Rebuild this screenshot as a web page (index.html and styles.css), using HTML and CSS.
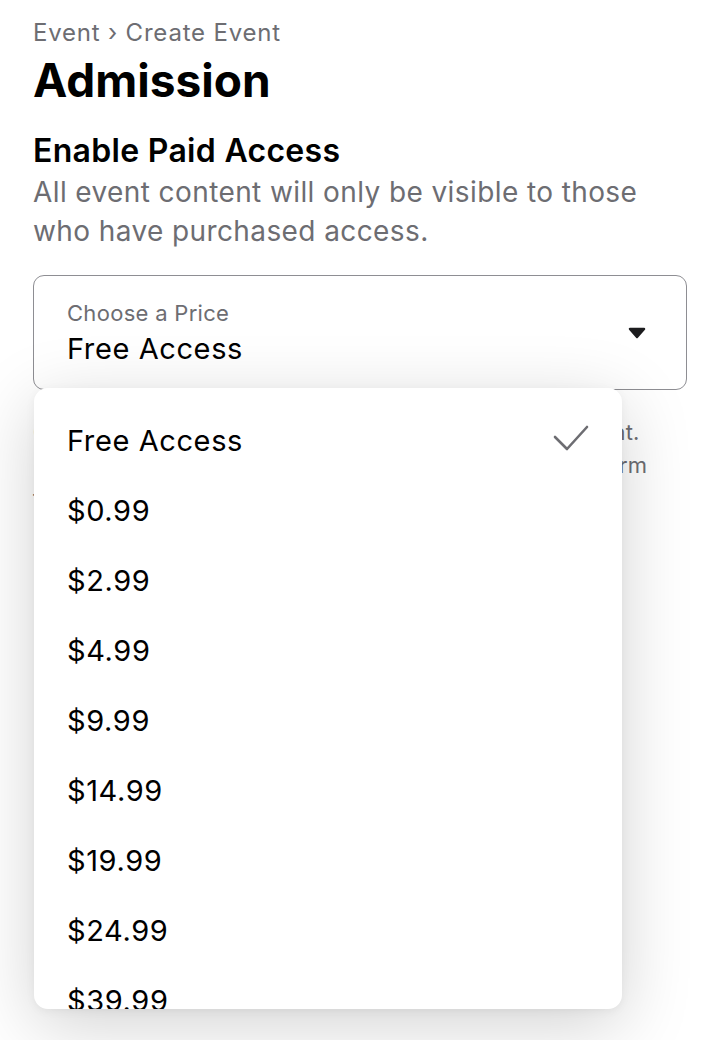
FILE: index.html
```html
<!DOCTYPE html>
<html lang="en">
<head>
<meta charset="utf-8">
<title>Admission</title>
<link rel="stylesheet" href="styles.css">
</head>
<body>
<main class="page">
  <nav class="crumb">Event › Create Event</nav>
  <h1 class="title">Admission</h1>
  <h2 class="subtitle">Enable Paid Access</h2>
  <p class="desc">All event content will only be visible to those who have purchased access.</p>

  <div class="field">
    <div class="select">
      <div class="select-text">
        <span class="select-label">Choose a Price</span>
        <span class="select-value">Free Access</span>
      </div>
      <svg class="caret" width="18" height="12" viewBox="0 0 18 12"><path d="M2 2 H16 L9 10 Z" fill="#1c1c1e" stroke="#1c1c1e" stroke-width="2.5" stroke-linejoin="round"/></svg>
    </div>

    <ul class="menu">
      <li class="item selected">Free Access
        <svg class="check" width="38" height="30" viewBox="0 0 38 30"><polyline points="3,14 15,26 35,4" fill="none" stroke="#6d6d72" stroke-width="2.6" stroke-linecap="round" stroke-linejoin="round"/></svg>
      </li>
      <li class="item">$0.99</li>
      <li class="item">$2.99</li>
      <li class="item">$4.99</li>
      <li class="item">$9.99</li>
      <li class="item">$14.99</li>
      <li class="item">$19.99</li>
      <li class="item">$24.99</li>
      <li class="item">$39.99</li>
    </ul>
  </div>

  <p class="note">Guests pay once to unlock all of the content in this event.<br>Proceeds are paid out soon after an event via the platform<br>fee schedule shown below.</p>
</main>
</body>
</html>
```

FILE: styles.css
```css
html, body {
  margin: 0;
  padding: 0;
  background: #ffffff;
}

body {
  font-family: Inter, "Noto Sans", "Liberation Sans", sans-serif;
  color: #000000;
}

.page {
  box-sizing: border-box;
  min-height: 1040px;
  padding: 18px 17px 0 33px;
}

.crumb {
  font-size: 24px;
  line-height: 30px;
  letter-spacing: 0.8px;
  color: #6d6d72;
}

.title {
  margin: 5px 0 0;
  font-size: 46px;
  font-weight: 700;
  line-height: 54px;
}

.subtitle {
  margin: 24px 0 0;
  font-size: 32px;
  font-weight: 600;
  line-height: 40px;
  letter-spacing: 0.3px;
}

.desc {
  max-width: 640px;
  margin: 2px 0 0;
  font-size: 28px;
  line-height: 39px;
  letter-spacing: 0.4px;
  color: #6d6d72;
}

.field {
  position: relative;
  margin-top: 24px;
}

.select {
  display: flex;
  align-items: center;
  justify-content: space-between;
  box-sizing: border-box;
  height: 115px;
  padding: 0 40px 0 33px;
  border: 1.5px solid #8e8e93;
  border-radius: 11px;
}

.select-text {
  display: flex;
  flex-direction: column;
}

.select-label {
  font-size: 22px;
  line-height: 32px;
  letter-spacing: 0.3px;
  color: #6d6d72;
}

.select-value {
  font-size: 29px;
  line-height: 40px;
  letter-spacing: 0.6px;
}

.menu {
  position: absolute;
  top: 113px;
  left: 1px;
  width: 588px;
  height: 621px;
  margin: 0;
  padding: 17px 0 0;
  list-style: none;
  box-sizing: border-box;
  overflow: hidden;
  background: #ffffff;
  border-radius: 14px;
  box-shadow: 0 16px 70px rgba(0, 0, 0, 0.18), 0 2px 10px rgba(0, 0, 0, 0.05);
  z-index: 2;
}

.item {
  display: flex;
  align-items: center;
  justify-content: space-between;
  height: 70px;
  padding: 0 32px 0 33px;
  font-size: 29px;
  letter-spacing: 0.6px;
}

.check {
  margin-top: -4px;
}

.note {
  margin: 26px 0 0;
  font-size: 22px;
  line-height: 33px;
  letter-spacing: 0.2px;
  color: #6d6d72;
}
```
